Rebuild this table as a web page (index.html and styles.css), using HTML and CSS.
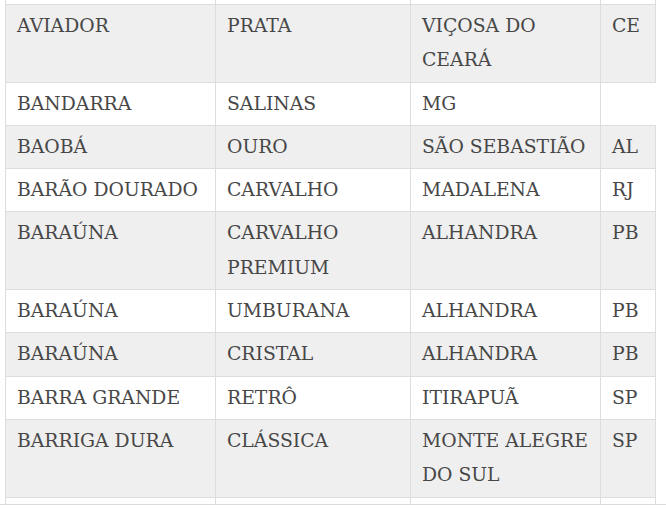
FILE: index.html
```html
<!DOCTYPE html>
<html lang="pt-BR">
<head>
<meta charset="utf-8">
<title>Tabela</title>
<link rel="stylesheet" href="styles.css">
</head>
<body>
<div class="viewport">
  <table class="data">
    <colgroup>
      <col class="c1"><col class="c2"><col class="c3"><col class="c4">
    </colgroup>
    <tbody>
      <tr class="partial"><td></td><td></td><td></td><td></td></tr>
      <tr class="shade"><td>AVIADOR</td><td>PRATA</td><td>VIÇOSA DO CEARÁ</td><td>CE</td></tr>
      <tr><td>BANDARRA</td><td>SALINAS</td><td>MG</td></tr>
      <tr class="shade"><td>BAOBÁ</td><td>OURO</td><td>SÃO SEBASTIÃO</td><td>AL</td></tr>
      <tr><td>BARÃO DOURADO</td><td>CARVALHO</td><td>MADALENA</td><td>RJ</td></tr>
      <tr class="shade"><td>BARAÚNA</td><td>CARVALHO PREMIUM</td><td>ALHANDRA</td><td>PB</td></tr>
      <tr><td>BARAÚNA</td><td>UMBURANA</td><td>ALHANDRA</td><td>PB</td></tr>
      <tr class="shade"><td>BARAÚNA</td><td>CRISTAL</td><td>ALHANDRA</td><td>PB</td></tr>
      <tr><td>BARRA GRANDE</td><td>RETRÔ</td><td>ITIRAPUÃ</td><td>SP</td></tr>
      <tr class="shade"><td>BARRIGA DURA</td><td>CLÁSSICA</td><td>MONTE ALEGRE DO SUL</td><td>SP</td></tr>
      <tr class="tail"><td></td><td></td><td></td><td></td></tr>
    </tbody>
  </table>
</div>
</body>
</html>
```

FILE: styles.css
```css
html, body {
  margin: 0;
  padding: 0;
  background: #ffffff;
}

.viewport {
  height: 504px;
  overflow: hidden;
  border-bottom: 1px solid #dcdcdc;
  padding-left: 5px;
}

.data {
  border-collapse: collapse;
  table-layout: fixed;
  width: 651px;
  font-family: "DejaVu Serif", serif;
  font-size: 18.8px;
  line-height: 34.3px;
  color: #474747;
}

.c1 { width: 210px; }
.c2 { width: 195px; }
.c3 { width: 190px; }
.c4 { width: 55px; }

.data td {
  border: 1px solid #dddddd;
  padding: 4px 9px 4px 11px;
  vertical-align: top;
  text-align: left;
  word-wrap: break-word;
}

.data tr.partial td {
  border-top: 0;
  padding: 0;
  height: 4px;
  line-height: 0;
}

.data tr.tail td {
  height: 40px;
}

.data tr.shade td {
  background: #efefef;
}
```
